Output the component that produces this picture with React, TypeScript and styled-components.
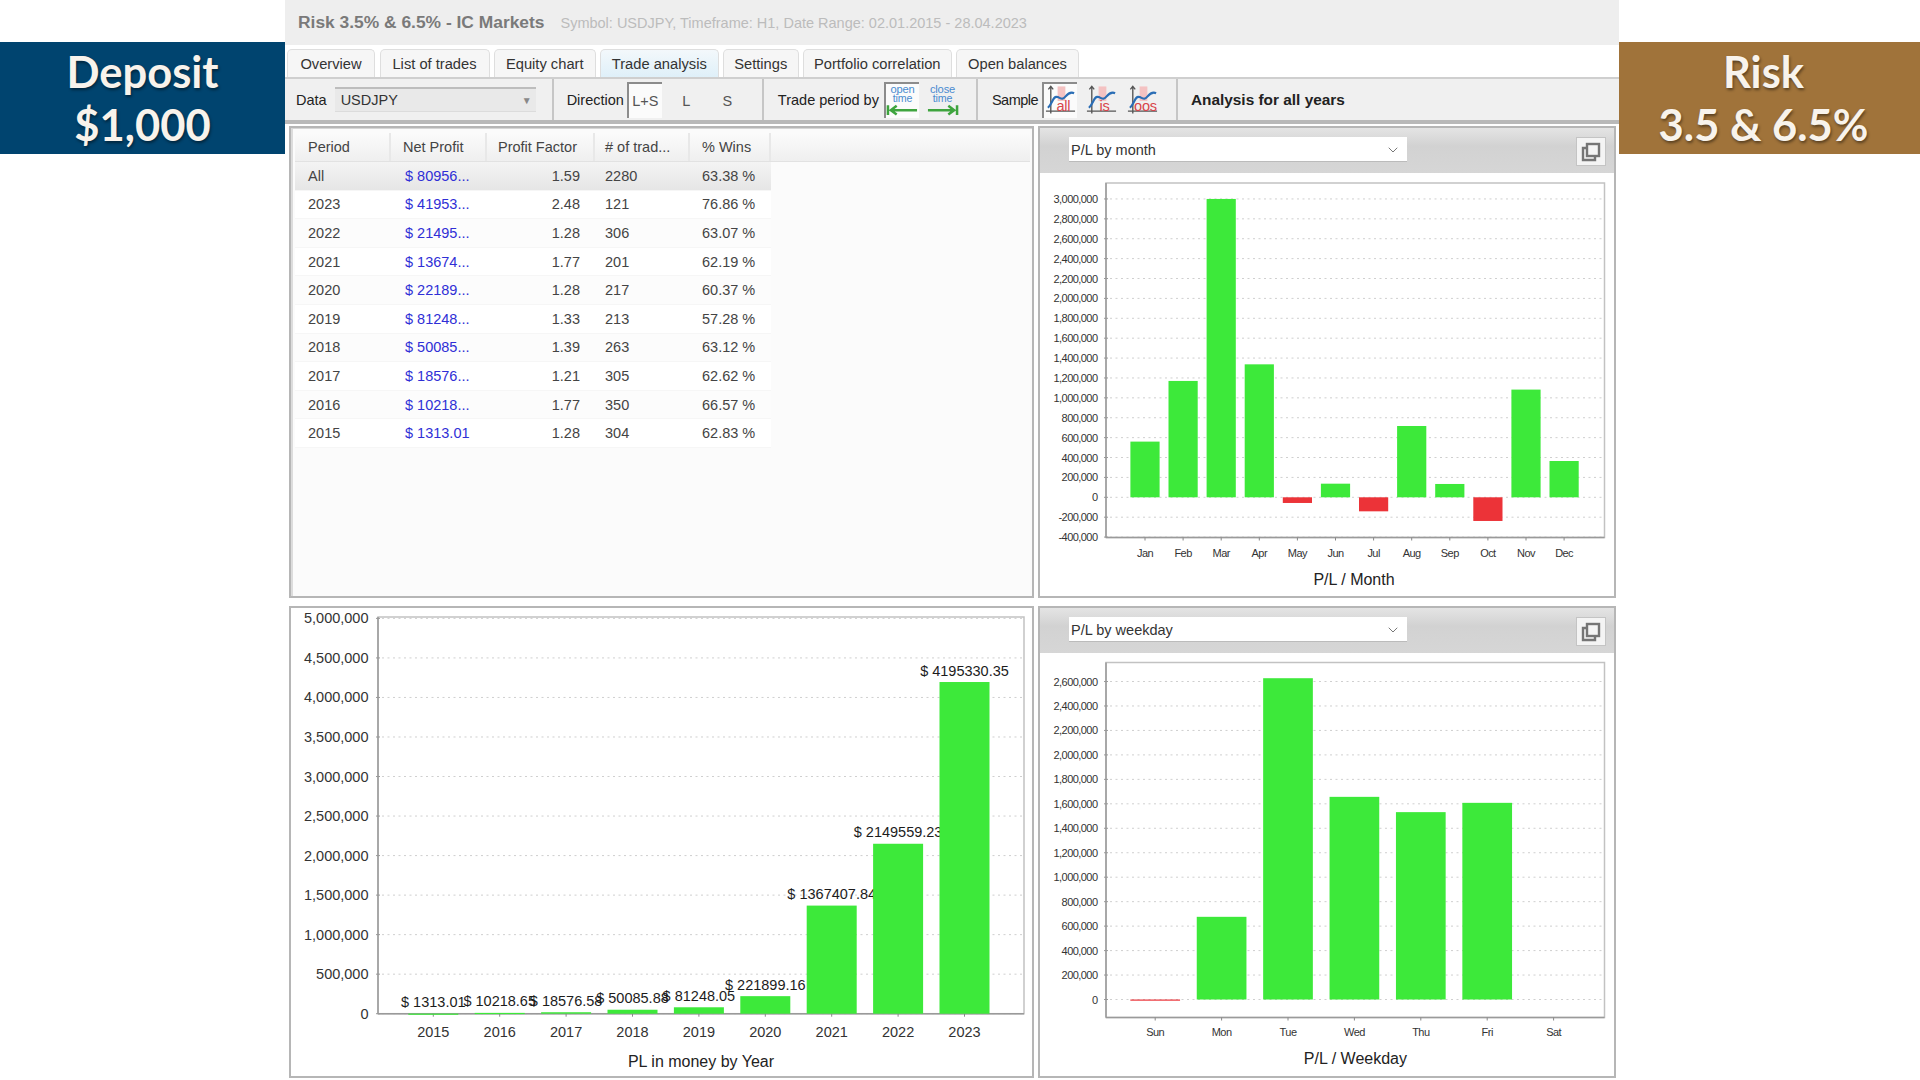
import React from "react";
import styled, { createGlobalStyle } from "styled-components";
import { ChevronDown } from "lucide-react";

const GlobalStyle = createGlobalStyle`
  html, body {
    margin: 0;
    padding: 0;
    background: #fff;
  }
  * {
    box-sizing: border-box;
  }
`;

const FONT = `"Liberation Sans", Arial, sans-serif`;
const GREEN = "#3de93a";
const RED = "#ec3338";

const TABS = [
  { name: "Overview", width: 88 },
  { name: "List of trades", width: 110 },
  { name: "Equity chart", width: 101.5 },
  { name: "Trade analysis", width: 118.5 },
  { name: "Settings", width: 75.5 },
  { name: "Portfolio correlation", width: 148.5 },
  { name: "Open balances", width: 123 },
];

const YEARS = [
  ["All", "$ 80956...", "1.59", "2280", "63.38 %"],
  ["2023", "$ 41953...", "2.48", "121", "76.86 %"],
  ["2022", "$ 21495...", "1.28", "306", "63.07 %"],
  ["2021", "$ 13674...", "1.77", "201", "62.19 %"],
  ["2020", "$ 22189...", "1.28", "217", "60.37 %"],
  ["2019", "$ 81248...", "1.33", "213", "57.28 %"],
  ["2018", "$ 50085...", "1.39", "263", "63.12 %"],
  ["2017", "$ 18576...", "1.21", "305", "62.62 %"],
  ["2016", "$ 10218...", "1.77", "350", "66.57 %"],
  ["2015", "$ 1313.01", "1.28", "304", "62.83 %"],
];

type Bar = { label: string; value: number; note?: string };

interface ChartConfig {
  view: [number, number, number, number];
  plot: { left: number; right: number; top: number; bottom: number };
  zeroY: number;
  pxPerUnit: number;
  ticks: number[];
  firstCenter: number;
  step: number;
  barWidth: number;
  bars: Bar[];
  tickFont: number;
  tickSpacing: number;
  tickRight: number;
  xLabelY: number;
  title: string;
  titleX: number;
  titleY: number;
}

const range = (from: number, to: number, by: number) => {
  const out: number[] = [];
  for (let v = from; v <= to; v += by) out.push(v);
  return out;
};

const monthChart: ChartConfig = {
  view: [1040, 173, 574, 423],
  plot: { left: 1106, right: 1604.5, top: 183, bottom: 537.5 },
  zeroY: 497.3,
  pxPerUnit: 19.89 / 200000,
  ticks: range(-400000, 3000000, 200000),
  firstCenter: 1145,
  step: 38.1,
  barWidth: 29.2,
  bars: [
    { label: "Jan", value: 560000 },
    { label: "Feb", value: 1170000 },
    { label: "Mar", value: 3000000 },
    { label: "Apr", value: 1337000 },
    { label: "May", value: -57000 },
    { label: "Jun", value: 137000 },
    { label: "Jul", value: -141000 },
    { label: "Aug", value: 717000 },
    { label: "Sep", value: 134000 },
    { label: "Oct", value: -238000 },
    { label: "Nov", value: 1083000 },
    { label: "Dec", value: 365000 },
  ],
  tickFont: 11,
  tickSpacing: -0.55,
  tickRight: 1097.5,
  xLabelY: 552.7,
  title: "P/L / Month",
  titleX: 1354,
  titleY: 579,
};

const weekdayChart: ChartConfig = {
  view: [1040, 654, 574, 422],
  plot: { left: 1106, right: 1604.5, top: 663, bottom: 1018 },
  zeroY: 1000,
  pxPerUnit: 24.46 / 200000,
  ticks: range(0, 2600000, 200000),
  firstCenter: 1155.2,
  step: 66.4,
  barWidth: 49.7,
  bars: [
    { label: "Sun", value: -8000 },
    { label: "Mon", value: 676000 },
    { label: "Tue", value: 2627000 },
    { label: "Wed", value: 1657000 },
    { label: "Thu", value: 1532000 },
    { label: "Fri", value: 1608000 },
    { label: "Sat", value: 0 },
  ],
  tickFont: 11,
  tickSpacing: -0.55,
  tickRight: 1097.5,
  xLabelY: 1032.7,
  title: "P/L / Weekday",
  titleX: 1355.4,
  titleY: 1059,
};

const yearChart: ChartConfig = {
  view: [291, 608, 741, 468],
  plot: { left: 378, right: 1024, top: 617, bottom: 1013.7 },
  zeroY: 1013.7,
  pxPerUnit: 39.53 / 500000,
  ticks: range(0, 5000000, 500000),
  firstCenter: 433.3,
  step: 66.4,
  barWidth: 50,
  bars: [
    { label: "2015", value: 1313, note: "$ 1313.01" },
    { label: "2016", value: 10218, note: "$ 10218.65" },
    { label: "2017", value: 18576, note: "$ 18576.58" },
    { label: "2018", value: 50085, note: "$ 50085.88" },
    { label: "2019", value: 81248, note: "$ 81248.05" },
    { label: "2020", value: 221899, note: "$ 221899.16" },
    { label: "2021", value: 1367407, note: "$ 1367407.84" },
    { label: "2022", value: 2149559, note: "$ 2149559.23" },
    { label: "2023", value: 4195330, note: "$ 4195330.35" },
  ],
  tickFont: 14.5,
  tickSpacing: 0,
  tickRight: 368.5,
  xLabelY: 1031.7,
  title: "PL in money by Year",
  titleX: 701,
  titleY: 1061,
};

const BarChart = ({ config }: { config: ChartConfig }) => {
  const { plot, zeroY, pxPerUnit, bars, step, firstCenter, barWidth } = config;
  return (
    <ChartSvg viewBox={config.view.join(" ")}>
      <rect
        x={plot.left}
        y={plot.top}
        width={plot.right - plot.left}
        height={plot.bottom - plot.top}
        fill="#fff"
        stroke="#c2c2c2"
        strokeWidth="1.5"
      />
      {config.ticks.map((tick) => {
        const y = zeroY - tick * pxPerUnit;
        return (
          <g key={tick}>
            <line x1={plot.left - 2} x2={plot.left + 2} y1={y} y2={y} stroke="#999" />
            <line
              x1={plot.left + 4}
              x2={plot.right}
              y1={y}
              y2={y}
              stroke="#cfcfcf"
              strokeDasharray="2 3.5"
            />
            <text
              x={config.tickRight}
              y={y}
              textAnchor="end"
              dominantBaseline="central"
              fontSize={config.tickFont}
              letterSpacing={config.tickSpacing}
              fill="#333"
            >
              {tick.toLocaleString("en-US")}
            </text>
          </g>
        );
      })}
      <line x1={plot.left} x2={plot.left} y1={plot.top} y2={plot.bottom} stroke="#9a9a9a" strokeWidth="1.5" />
      <line x1={plot.left} x2={plot.right} y1={plot.bottom} y2={plot.bottom} stroke="#9a9a9a" strokeWidth="1.5" />
      {bars.map((bar, i) => {
        const cx = firstCenter + i * step;
        const h = Math.abs(bar.value) * pxPerUnit;
        return (
          <g key={bar.label}>
            <line x1={cx} x2={cx} y1={plot.bottom} y2={plot.bottom + 3} stroke="#888" />
            {bar.value !== 0 && (
              <rect
                x={cx - barWidth / 2}
                y={bar.value > 0 ? zeroY - h : zeroY}
                width={barWidth}
                height={Math.max(h, 1.2)}
                fill={bar.value > 0 ? GREEN : RED}
              />
            )}
            {bar.note && (
              <text
                x={cx}
                y={zeroY - h - 11.5}
                textAnchor="middle"
                dominantBaseline="central"
                fontSize="14.5"
                fill="#1c1c1c"
              >
                {bar.note}
              </text>
            )}
            <text
              x={cx}
              y={config.xLabelY}
              textAnchor="middle"
              dominantBaseline="central"
              fontSize={config.tickFont}
              letterSpacing={config.tickSpacing}
              fill="#333"
            >
              {bar.label}
            </text>
          </g>
        );
      })}
      <text
        x={config.titleX}
        y={config.titleY}
        textAnchor="middle"
        dominantBaseline="central"
        fontSize="16"
        fill="#222"
      >
        {config.title}
      </text>
    </ChartSvg>
  );
};

const CopyGlyph = () => (
  <svg width="20" height="20" viewBox="0 0 20 20" fill="none" stroke="#757575" strokeWidth="2.4">
    <path d="M5 6H2v12h12v-3" />
    <rect x="6" y="2" width="12" height="12" />
  </svg>
);

const TimeIcon = ({ first, right }: { first: string; right?: boolean }) => (
  <svg width="34" height="33" viewBox="0 0 34 33">
    <text x="17" y="8.5" textAnchor="middle" fontSize="11.5" letterSpacing="-0.2" fill="#4a8bd0">
      {first}
    </text>
    <text x="17" y="18" textAnchor="middle" fontSize="11" letterSpacing="-0.2" fill="#4a8bd0">
      time
    </text>
    {right ? (
      <path d="M2 26.5h26M23 22l6 4.5-6 4.5M32 21.5v10" fill="none" stroke="#3ea43e" strokeWidth="2.6" />
    ) : (
      <path d="M6 26.5h26M11 22l-6 4.5 6 4.5M2 21.5v10" fill="none" stroke="#3ea43e" strokeWidth="2.6" />
    )}
  </svg>
);

const SampleIcon = ({ mark }: { mark: string }) => (
  <svg width="34" height="33" viewBox="0 0 34 33">
    <rect x="14" y="2" width="8" height="15" fill="#f4c2c2" />
    <path d="M7 2v28M2 27.500h30M4.500 5L7 2l2.500 3" fill="none" stroke="#555" strokeWidth="1.4" />
    <path d="M4 24c5-4 5-13 10-11 4 1.500 5 3 8-.5 2.500-3 5-5.500 9-3.500" fill="none" stroke="#2a6db5" strokeWidth="2.2" />
    <text x="20" y="27" textAnchor="middle" fontSize="15" fill="#d8454b" letterSpacing="-0.3">
      {mark}
    </text>
  </svg>
);

const Dropdown = ({ label }: { label: string }) => (
  <Select>
    <span>{label}</span>
    <ChevronDown size={16} strokeWidth={1.2} color="#555" />
  </Select>
);

const App = () => (
  <Page>
    <GlobalStyle />
    <Banner $bg="#00446f">
      <div>Deposit</div>
      <div>$1,000</div>
    </Banner>
    <Main>
      <TitleBar>
        <AppTitle>Risk 3.5% &amp; 6.5% - IC Markets</AppTitle>
        <Meta>Symbol: USDJPY, Timeframe: H1, Date Range: 02.01.2015 - 28.04.2023</Meta>
      </TitleBar>
      <Tabs>
        {TABS.map((tab) => (
          <Tab key={tab.name} $width={tab.width} $active={tab.name === "Trade analysis"}>
            {tab.name}
          </Tab>
        ))}
      </Tabs>
      <Toolbar>
        <Group $pad="0 16px 0 11px" $gap={8}>
          <Label>Data</Label>
          <DataSelect>
            <span>USDJPY</span>
            <SmallArrow>▼</SmallArrow>
          </DataSelect>
        </Group>
        <Group $pad="0 18px 0 13px" $gap={6}>
          <Label $trim={3}>Direction</Label>
          <ToolButton $pressed>L+S</ToolButton>
          <ToolButton>L</ToolButton>
          <ToolButton>S</ToolButton>
        </Group>
        <Group $pad="0 17px 0 14px" $gap={5}>
          <Label>Trade period by</Label>
          <ToolButton $pressed>
            <TimeIcon first="open" />
          </ToolButton>
          <ToolButton>
            <TimeIcon first="close" right />
          </ToolButton>
        </Group>
        <Group $pad="0 17px 0 14px" $gap={6}>
          <SampleLabel>Sample</SampleLabel>
          <ToolButton $pressed>
            <SampleIcon mark="all" />
          </ToolButton>
          <ToolButton>
            <SampleIcon mark="is" />
          </ToolButton>
          <ToolButton>
            <SampleIcon mark="oos" />
          </ToolButton>
        </Group>
        <Summary>Analysis for all years</Summary>
      </Toolbar>
      <Content>
        <Panel>
          <TableFrame>
            <HeadRow>
              <HeadCell $pad={13}>Period</HeadCell>
              <HeadCell $pad={12}>Net Profit</HeadCell>
              <HeadCell $pad={11}>Profit Factor</HeadCell>
              <HeadCell $pad={10}># of trad...</HeadCell>
              <HeadCell $pad={12}>% Wins</HeadCell>
            </HeadRow>
            {YEARS.map(([period, profit, factor, trades, wins], i) => (
              <DataRow key={period} $selected={i === 0} $odd={i % 2 === 1}>
                <PeriodCell>{period}</PeriodCell>
                <ProfitCell>{profit}</ProfitCell>
                <FactorCell>{factor}</FactorCell>
                <TradesCell>{trades}</TradesCell>
                <WinsCell>{wins}</WinsCell>
              </DataRow>
            ))}
          </TableFrame>
        </Panel>
        <Panel>
          <ChartHead>
            <Dropdown label="P/L by month" />
            <CopyButton>
              <CopyGlyph />
            </CopyButton>
          </ChartHead>
          <BarChart config={monthChart} />
        </Panel>
        <Panel>
          <BarChart config={yearChart} />
        </Panel>
        <Panel>
          <ChartHead>
            <Dropdown label="P/L by weekday" />
            <CopyButton>
              <CopyGlyph />
            </CopyButton>
          </ChartHead>
          <BarChart config={weekdayChart} />
        </Panel>
      </Content>
    </Main>
    <Banner $bg="#a0733a" $shift={12}>
      <div>Risk</div>
      <div>3.5 &amp; 6.5%</div>
    </Banner>
  </Page>
);

export default App;

const Page = styled.div`
  width: 1920px;
  height: 1080px;
  overflow: hidden;
  display: grid;
  grid-template-columns: 285px 1334px 301px;
  align-items: start;
  font-family: ${FONT};
`;

const Banner = styled.div<{ $bg: string; $shift?: number }>`
  margin-top: 42px;
  height: 112px;
  padding-right: ${(p) => p.$shift ?? 0}px;
  display: flex;
  flex-direction: column;
  justify-content: center;
  align-items: center;
  background: ${(p) => p.$bg};
  color: #f8f3ec;
  font-family: Lato, "Open Sans", sans-serif;
  font-weight: 700;
  font-size: 43.5px;
  line-height: 53px;
  text-shadow: 1px 2px 3px rgba(0, 0, 0, 0.45);
`;

const Main = styled.div`
  display: flex;
  flex-direction: column;
  height: 1080px;
`;

const TitleBar = styled.div`
  height: 45px;
  padding-left: 13px;
  display: flex;
  align-items: center;
  gap: 16px;
  background: #eeeeee;
`;

const AppTitle = styled.div`
  font-size: 17.4px;
  font-weight: 700;
  color: #7a7a7a;
`;

const Meta = styled.div`
  font-size: 14.5px;
  color: #bcbcbc;
`;

const Tabs = styled.div`
  height: 32px;
  padding: 4px 0 0 2px;
  display: flex;
  gap: 4.5px;
  background: #fff;
`;

const Tab = styled.div<{ $width: number; $active?: boolean }>`
  width: ${(p) => p.$width}px;
  height: 28px;
  display: flex;
  align-items: center;
  justify-content: center;
  font-size: 14.7px;
  color: #333;
  border: 1px solid #dedede;
  border-bottom: none;
  border-radius: 5px 5px 0 0;
  background: ${(p) => (p.$active ? "linear-gradient(#f3f8fb, #dff0f9)" : "#f6f6f6")};
`;

const Toolbar = styled.div`
  height: 47px;
  display: flex;
  align-items: stretch;
  background: #f0f0f0;
  border-top: 2px solid #cfcfcf;
  border-bottom: 4px solid #b9b9b9;
`;

const Group = styled.div<{ $pad: string; $gap: number }>`
  display: flex;
  align-items: center;
  gap: ${(p) => p.$gap}px;
  padding: ${(p) => p.$pad};
  border-right: 2px solid #c6c6c6;
`;

const Label = styled.span<{ $trim?: number }>`
  margin-right: ${(p) => -(p.$trim ?? 0)}px;
  font-size: 14.5px;
  color: #222;
  white-space: nowrap;
`;

const SampleLabel = styled(Label)`
  width: 44px;
  letter-spacing: -0.5px;
`;

const DataSelect = styled.div`
  width: 201px;
  height: 25px;
  padding: 0 4px 0 6px;
  display: flex;
  align-items: center;
  justify-content: space-between;
  font-size: 14.5px;
  color: #333;
  background: #e9e9e9;
  border-top: 2px solid #bdbdbd;
  border-bottom: 1px solid #dcdcdc;
`;

const SmallArrow = styled.span`
  font-size: 10px;
  color: #888;
`;

const ToolButton = styled.div<{ $pressed?: boolean }>`
  width: 35px;
  height: 36px;
  display: flex;
  align-items: center;
  justify-content: center;
  font-size: 14.5px;
  color: #555;
  background: ${(p) => (p.$pressed ? "#fbfbfb" : "transparent")};
  border-top: 2px solid ${(p) => (p.$pressed ? "#8c8c8c" : "transparent")};
  border-left: 2px solid ${(p) => (p.$pressed ? "#8c8c8c" : "transparent")};
`;

const Summary = styled.div`
  padding-left: 13px;
  display: flex;
  align-items: center;
  font-size: 15.4px;
  font-weight: 700;
  color: #222;
`;

const Content = styled.div`
  flex: 1;
  padding: 2px 3px 2px 4px;
  display: grid;
  grid-template-columns: 745px 578px;
  grid-template-rows: 472px 472px;
  column-gap: 4px;
  row-gap: 8px;
  background: #fff;
`;

const Panel = styled.div`
  border: 2px solid #b6b6b6;
  display: flex;
  flex-direction: column;
  overflow: hidden;
  background: #fff;
`;

const TableFrame = styled.div`
  flex: 1;
  padding: 4px 2px 0;
  background: #fbfbfb;
  border-top: 1px solid #d6d6d6;
  border-left: 2px solid #dcdcdc;
`;

const cols = "96px 96px 108px 95px 81px";

const HeadRow = styled.div`
  display: grid;
  grid-template-columns: ${cols};
  height: 29px;
  background: linear-gradient(#fbfbfb, #efefef);
  border-bottom: 1px solid #e2e2e2;
`;

const HeadCell = styled.div<{ $pad: number }>`
  padding-left: ${(p) => p.$pad}px;
  display: flex;
  align-items: center;
  font-size: 14.5px;
  color: #444;
  border-right: 2px solid #e8e8e8;
  white-space: nowrap;
`;

const DataRow = styled.div<{ $selected?: boolean; $odd?: boolean }>`
  width: 476px;
  height: 28.6px;
  display: grid;
  grid-template-columns: ${cols};
  align-items: center;
  font-size: 14.5px;
  color: #444;
  border-bottom: 1px solid #f6f6f6;
  background: ${(p) =>
    p.$selected ? "linear-gradient(#f4f4f4, #e6e6e6)" : p.$odd ? "#ffffff" : "#fcfcfc"};
`;

const PeriodCell = styled.div`
  padding-left: 13px;
`;

const ProfitCell = styled.div`
  padding-left: 14px;
  color: #2f2fd6;
`;

const FactorCell = styled.div`
  padding-right: 15px;
  text-align: right;
`;

const TradesCell = styled.div`
  padding-left: 10px;
`;

const WinsCell = styled.div`
  padding-left: 12px;
  white-space: nowrap;
`;

const ChartHead = styled.div`
  height: 45px;
  flex: none;
  padding: 9px 8px 0 29px;
  display: flex;
  align-items: flex-start;
  justify-content: space-between;
  background: linear-gradient(#e4e4e4, #d2d2d2 40%, #d6d6d6);
`;

const Select = styled.div`
  width: 338px;
  height: 25px;
  padding: 1px 6px 0 2px;
  display: flex;
  align-items: center;
  justify-content: space-between;
  font-size: 14.5px;
  color: #333;
  background: #fff;
  border-bottom: 1px solid #bbb;
`;

const CopyButton = styled.div`
  width: 30px;
  height: 29px;
  display: flex;
  align-items: center;
  justify-content: center;
  background: #f4f4f4;
  border: 1px solid #c4c4c4;
`;

const ChartSvg = styled.svg`
  display: block;
  width: 100%;
  flex: 1;
  min-height: 0;
  font-family: ${FONT};
`;
